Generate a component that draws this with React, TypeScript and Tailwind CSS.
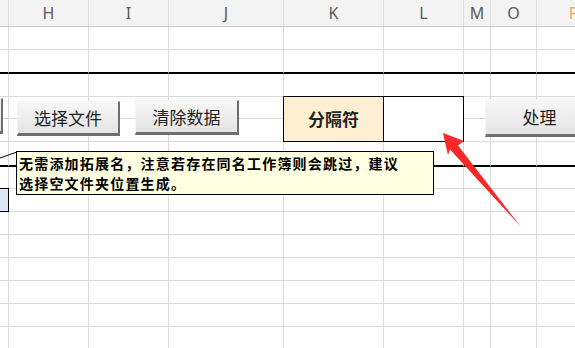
import React from 'react'

const COLS = ['', 'H', 'I', 'J', 'K', 'L', 'M', 'O', 'P']
const ROWS = 14
const THICK = [1, 5]

function Btn({ label, className }: { label: string; className: string }) {
  return (
    <div
      className={`absolute flex items-center justify-center bg-gradient-to-b from-[#f7f7f7] to-[#e4e4e4] border-t border-l border-t-[#f4f4f4] border-l-[#f4f4f4] border-r-2 border-b-[3px] border-r-[#6e6e6e] border-b-[#6e6e6e] text-[17px] text-[#1f1f1f] ${className}`}
    >
      {label}
    </div>
  )
}

export default function App() {
  const cells: React.ReactNode[] = []
  for (let r = 0; r < ROWS; r++) {
    for (let c = 0; c < COLS.length; c++) {
      if (r === 4 && (c === 4 || c === 5)) continue
      const thick = THICK.includes(r)
      if (r === 3 && c === 4) {
        cells.push(
          <div key={`${r}-${c}`} className="row-span-2 relative z-10 -mt-px -ml-px flex items-center justify-center border border-black bg-[#fdefd1] text-[17px] font-bold text-[#222]">
            分隔符
          </div>
        )
        continue
      }
      if (r === 3 && c === 5) {
        cells.push(
          <div key={`${r}-${c}`} className="row-span-2 relative z-10 -mt-px border-t border-r border-b border-black bg-white" />
        )
        continue
      }
      if (r === 7 && c === 0) {
        cells.push(
          <div key={`${r}-${c}`} className="relative z-10 -mt-px border-t border-r border-b border-black bg-[#dde8f6]" />
        )
        continue
      }
      cells.push(
        <div
          key={`${r}-${c}`}
          className={`border-r border-r-[#dadada] ${thick ? 'border-b-2 border-b-black' : 'border-b border-b-[#dadada]'}`}
        />
      )
    }
  }

  return (
    <div className="relative w-[575px] h-[348px] overflow-hidden bg-white font-['Noto_Sans_CJK_SC',sans-serif]">
      <div className="w-[625px]">
        {/* column header */}
        <div className="grid grid-cols-[9px_80px_80px_115px_100px_80px_27px_46px_88px] h-[27px] bg-[#f3f3f3] border-b border-[#c8c8c8]">
          {COLS.map((h, i) => (
            <div
              key={i}
              className={`flex items-center justify-center border-r border-[#dedede] text-[16px] font-['Noto_Sans',sans-serif] ${h === 'P' ? 'text-[#f0a860] pr-[14px]' : 'text-[#5a5a5a]'}`}
            >
              {h}
            </div>
          ))}
        </div>
        {/* sheet */}
        <div className="grid grid-cols-[9px_80px_80px_115px_100px_80px_27px_46px_88px] grid-rows-[23px_24px_23px_22px_23px_25px_22px_23px_23px_23px_23px_23px_23px_23px]">
          {cells}
        </div>
      </div>

      {/* form buttons */}
      <Btn label="" className="left-[-100px] top-[98px] w-[103px] h-[36px]" />
      <Btn label="选择文件" className="left-[17px] top-[101px] w-[103px] h-[35px]" />
      <Btn label="清除数据" className="left-[135px] top-[100px] w-[104px] h-[35px]" />
      <Btn label="处理" className="left-[485px] top-[99px] w-[110px] h-[38px]" />

      {/* comment box */}
      <svg className="absolute left-0 top-0" width="20" height="170">
        <line x1="0" y1="158" x2="17" y2="152" stroke="black" strokeWidth="1" />
      </svg>
      <div className="absolute left-[16px] top-[151px] w-[418px] h-[44px] z-20 border border-black bg-[#ffffe1] px-[2px] pt-[1px] text-[14px] leading-[20px] tracking-[1.2px] font-bold text-black">
        无需添加拓展名，注意若存在同名工作簿则会跳过，建议
        <br />
        选择空文件夹位置生成。
      </div>

      {/* red arrow */}
      <svg className="absolute left-0 top-0 z-30" width="575" height="348">
        <polygon
          points="443,133 464,141 458,145.5 521,227 450,149.5 448,155"
          fill="#f5282a"
        />
      </svg>
    </div>
  )
}
